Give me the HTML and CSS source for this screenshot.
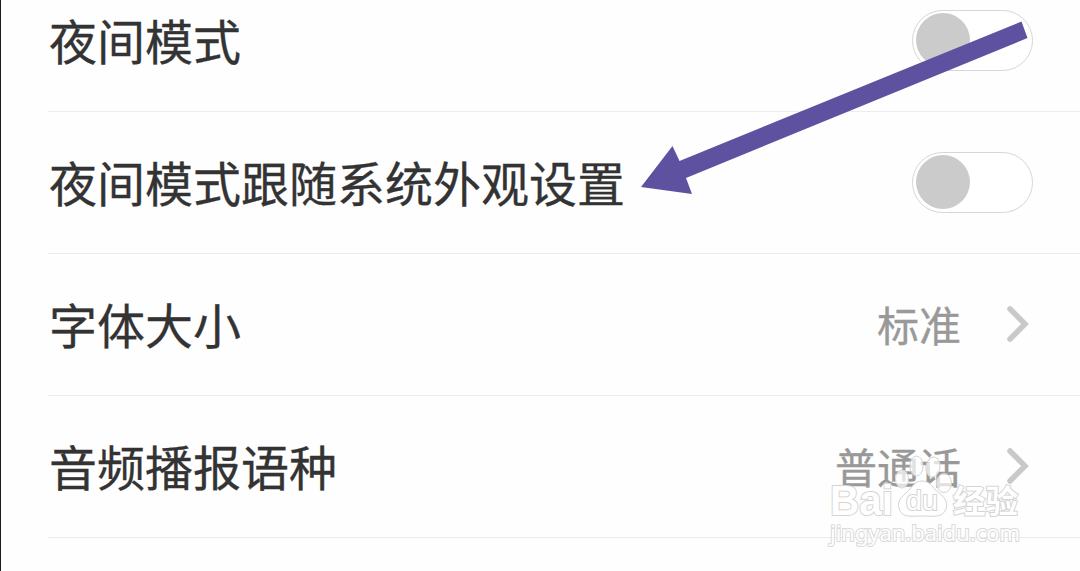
FILE: index.html
```html
<!DOCTYPE html>
<html lang="zh-CN">

<head>
    <meta charset="UTF-8">
    <title>设置</title>
    <link rel="stylesheet" href="styles.css">
</head>

<body>
    <div class="wrap">
        <ul class="list">
            <li class="item">
                <span class="name">夜间模式</span>
                <span class="switch"></span>
            </li>
            <li class="item">
                <span class="name">夜间模式跟随系统外观设置</span>
                <span class="switch"></span>
            </li>
            <li class="item">
                <span class="name">字体大小</span>
                <span class="value">标准</span>
                <svg class="more" viewBox="0 0 24 40"><path d="M4 5L19 20L4 35"/></svg>
            </li>
            <li class="item">
                <span class="name">音频播报语种</span>
                <span class="value">普通话</span>
                <svg class="more" viewBox="0 0 24 40"><path d="M4 5L19 20L4 35"/></svg>
            </li>
        </ul>
        <!--箭头-->
        <svg class="arrow" viewBox="0 0 1080 571">
            <path d="M641 187L672.500 146L679.500 161L1021.500 21.500L1027.500 38L686 178L692 194Z"/>
        </svg>
        <!--水印-->
        <svg class="mark" viewBox="0 0 220 125">
            <g class="paw">
                <ellipse cx="82" cy="49" rx="6.500" ry="9"/>
                <ellipse cx="96.500" cy="36" rx="6.500" ry="10"/>
                <ellipse cx="113" cy="37" rx="7" ry="10" transform="rotate(10 113 37)"/>
                <ellipse cx="124" cy="53" rx="7.500" ry="9.500"/>
                <path class="palm" d="M102 51C94 51 92 58 86 63C78 69 77 75 80 81C84 88 93 86 102 86C112 86 121 88 125 81C129 74 125 67 119 63C112 58 111 51 102 51Z"/>
            </g>
            <text class="logo" x="10" y="85" font-size="43" textLength="63" lengthAdjust="spacingAndGlyphs">Bai</text>
            <text class="logo du" x="86" y="80" font-size="28" textLength="32" lengthAdjust="spacingAndGlyphs">du</text>
            <text class="logo cn" x="133" y="83" font-size="32" textLength="65" lengthAdjust="spacingAndGlyphs">经验</text>
            <text class="site" x="10" y="111" font-size="22" textLength="190" lengthAdjust="spacingAndGlyphs">jingyan.baidu.com</text>
        </svg>
    </div>
</body>

</html>
```
FILE: styles.css
```css
body {
    margin: 0;
    background-color: #fefefe;
    font-family: "Noto Sans CJK SC", sans-serif;
}

.wrap {
    position: relative;
    height: 571px;
    box-sizing: border-box;
    border-left: 1px solid #1c1c1e;
    overflow: hidden;
}

.list {
    list-style: none;
    margin: -30px 0 0 47px;
    padding: 0;
}

.item {
    display: flex;
    align-items: center;
    height: 142px;
    box-sizing: border-box;
    padding-right: 46px;
    border-bottom: 1px solid #ececec;
}

.name {
    flex: 1;
    margin-bottom: 3px;
    padding-left: 1px;
    font-size: 48px;
    line-height: 70px;
    color: #333;
    -webkit-text-stroke: 0.3px #333;
}

.switch {
    width: 121px;
    height: 61px;
    box-sizing: border-box;
    margin: 0 1px 1px 0;
    padding: 2px 3px;
    border: 1px solid #d6d6d6;
    border-radius: 31px;
    background-color: #fff;
}

.switch::before {
    content: "";
    display: block;
    width: 54px;
    height: 54px;
    border-radius: 50%;
    background-color: #cbcbcb;
}

.value {
    margin: 0 43px 1px 0;
    font-size: 42px;
    line-height: 62px;
    color: #999;
    -webkit-text-stroke: 0.3px #999;
}

.more {
    width: 24px;
    height: 40px;
    margin: 0 4px 2px 2px;
    fill: none;
    stroke: #c9c9c9;
    stroke-width: 5.5;
    stroke-linecap: round;
}

.arrow {
    position: absolute;
    top: 0;
    left: -1px;
    width: 1080px;
    height: 571px;
    fill: #5e519f;
}

.mark {
    position: absolute;
    top: 430px;
    left: 819px;
    width: 220px;
    height: 125px;
    stroke: #d4d4d4;
    stroke-width: 1;
    fill: #fff;
}

.paw {
    fill: rgba(255, 255, 255, 0.7);
}

.palm {
    fill: #fff;
}

.logo {
    font-family: "Liberation Sans", sans-serif;
    font-weight: bold;
    stroke-width: 2;
    paint-order: stroke;
}

.du {
    font-weight: normal;
}

.cn {
    font-family: "Noto Sans CJK SC", sans-serif;
}

.site {
    font-family: "Noto Sans", sans-serif;
    stroke-width: 2;
    paint-order: stroke;
    opacity: 0.85;
}
```
